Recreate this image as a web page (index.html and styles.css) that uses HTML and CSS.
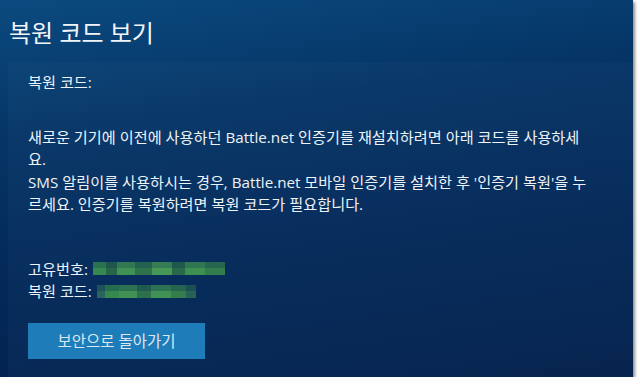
FILE: index.html
```html
<!DOCTYPE html>
<html lang="ko">
<head>
<meta charset="utf-8">
<link rel="stylesheet" href="styles.css">
</head>
<body>
<div class="panel">
  <div class="header"><h1 class="title">복원 코드 보기</h1></div>
  <div class="content">
    <div class="label">복원 코드:</div>
    <p class="desc">새로운 기기에 이전에 사용하던 Battle.net 인증기를 재설치하려면 아래 코드를 사용하세요.<br>SMS 알림이를 사용하시는 경우, Battle.net 모바일 인증기를 설치한 후 '인증기 복원'을 누르세요. 인증기를 복원하려면 복원 코드가 필요합니다.</p>
    <div class="codes">
      <div class="row">고유번호: <span class="blur blur-a"></span></div>
      <div class="row">복원 코드: <span class="blur blur-b"></span></div>
    </div>
    <button class="btn">보안으로 돌아가기</button>
  </div>
</div>
</body>
</html>
```
FILE: styles.css
```css
html, body {
  margin: 0;
  padding: 0;
  background: #ffffff;
}
body {
  font-family: "Open Sans", "Noto Sans CJK KR", sans-serif;
  color: #eef3f8;
}
.panel {
  width: 633px;
  height: 377px;
  display: flex;
  flex-direction: column;
  background: linear-gradient(172deg, #0b4a7f 0%, #053566 30%, #03295a 60%, #021f4a 100%);
  box-shadow: 2px 2px 3px rgba(0, 0, 0, 0.45);
}
.header {
  height: 62px;
  display: flex;
  align-items: center;
  padding-left: 9px;
  flex: none;
}
.title {
  margin: 0;
  font-size: 24px;
  font-weight: 400;
  color: #f2f5f8;
}
.content {
  flex: 1;
  margin-left: 8px;
  padding: 9px 20px 0 20px;
  background: rgba(255, 255, 255, 0.025);
  font-size: 15.2px;
  line-height: 22.5px;
}
.desc {
  margin: 32px 0 0 0;
  width: 565px;
}
.codes {
  margin-top: 42px;
}
.row {
  display: flex;
  align-items: center;
  gap: 5px;
}
.blur {
  display: inline-block;
  height: 13px;
  opacity: 0.85;
}
.blur-a {
  width: 132px;
  background:
    linear-gradient(180deg, rgba(0, 40, 80, 0.25) 0 50%, rgba(0, 0, 0, 0) 50% 100%),
    linear-gradient(90deg, #3f9a4c 0 10%, #2d6f46 10% 18%, #4aa352 18% 32%, #36804a 32% 45%, #52aa55 45% 60%, #2f7448 60% 70%, #48a250 70% 85%, #3b8a4b 85% 100%);
}
.blur-b {
  width: 99px;
  background:
    linear-gradient(180deg, rgba(0, 40, 80, 0.3) 0 45%, rgba(0, 0, 0, 0) 45% 100%),
    linear-gradient(90deg, #2f6f5a 0 8%, #3f9a4c 8% 22%, #4aa352 22% 40%, #357d4a 40% 55%, #4ba453 55% 75%, #3d8c4c 75% 90%, #2e6b55 90% 100%);
}
.btn {
  margin-top: 20px;
  width: 177px;
  height: 36px;
  border: none;
  background: #1e7db9;
  color: #dbe8f2;
  font-family: "Open Sans", "Noto Sans CJK KR", sans-serif;
  font-size: 15.5px;
  padding: 0;
  cursor: pointer;
}
```
